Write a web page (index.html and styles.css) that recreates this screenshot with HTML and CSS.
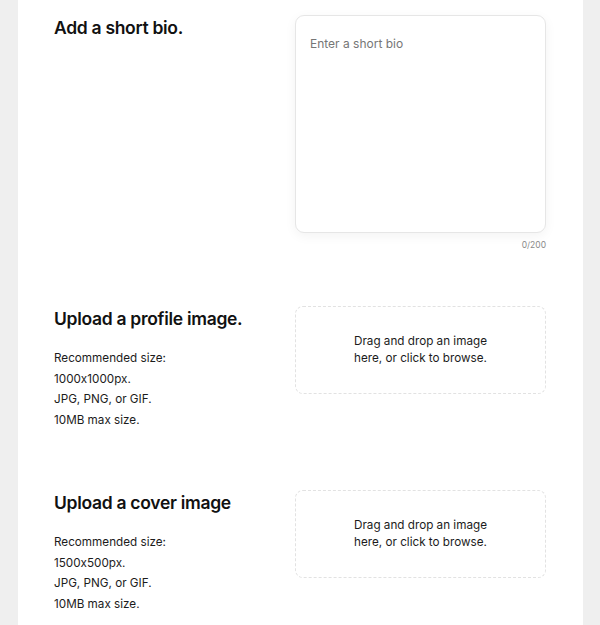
FILE: index.html
```html
<!DOCTYPE html>
<html>
<head>
  <title>Edit Profile</title>
  <link rel="stylesheet" href="styles.css">
</head>
<body>
  <div class="panel">
    <div class="section bio-section">
      <h2>Add a short bio.</h2>
      <div class="field">
        <textarea class="bio" placeholder="Enter a short bio" maxlength="200"></textarea>
        <div class="counter">0/200</div>
      </div>
    </div>

    <div class="section">
      <div>
        <h2>Upload a profile image.</h2>
        <ul class="specs">
          <li>Recommended size:</li>
          <li>1000x1000px.</li>
          <li>JPG, PNG, or GIF.</li>
          <li>10MB max size.</li>
        </ul>
      </div>
      <div class="dropzone">
        <p>Drag and drop an image<br>here, or click to browse.</p>
      </div>
    </div>

    <div class="section">
      <div>
        <h2>Upload a cover image</h2>
        <ul class="specs">
          <li>Recommended size:</li>
          <li>1500x500px.</li>
          <li>JPG, PNG, or GIF.</li>
          <li>10MB max size.</li>
        </ul>
      </div>
      <div class="dropzone">
        <p>Drag and drop an image<br>here, or click to browse.</p>
      </div>
    </div>
  </div>
</body>
</html>
```

FILE: styles.css
```css
body {
  margin: 0;
  background-color: #efefef;
  font-family: Inter, "Noto Sans", sans-serif;
  font-feature-settings: "calt" 0;
  color: #1c1c1c;
}

.panel {
  box-sizing: border-box;
  min-height: 100vh;
  margin: 0 17px 0 18px;
  padding: 15px 37px 0 36px;
  background-color: #fff;
}

.section {
  display: grid;
  grid-template-columns: 1fr 251px;
  margin-bottom: 59px;
}

.section:last-child {
  margin-bottom: 0;
}

.bio-section {
  margin-bottom: 55px;
}

h2 {
  margin: 0;
  font-size: 17.5px;
  line-height: 24px;
  font-weight: 600;
  color: #111;
  letter-spacing: -0.3px;
  padding-top: 1px;
}

.bio {
  display: block;
  box-sizing: border-box;
  width: 100%;
  height: 218px;
  padding: 20px 15px 14px 14px;
  border: 1px solid #e6e6e6;
  border-radius: 9px;
  box-shadow: 0 3px 12px rgba(0, 0, 0, 0.05);
  font-family: inherit;
  font-size: 12px;
  resize: none;
  outline: none;
}

.bio::placeholder {
  color: #767676;
}

.counter {
  margin-top: 6px;
  text-align: right;
  font-size: 8.5px;
  line-height: 12px;
  color: #8a8a8a;
}

.specs {
  list-style: none;
  margin: 17px 0 0;
  padding: 0;
  font-size: 11.7px;
  line-height: 20.7px;
}

.dropzone {
  box-sizing: border-box;
  height: 88px;
  border: 1px dashed #e2e2e2;
  border-radius: 8px;
  display: flex;
  align-items: center;
  justify-content: center;
  cursor: pointer;
}

.dropzone p {
  margin: 0;
  text-align: center;
  font-size: 11.7px;
  line-height: 17px;
}
```
